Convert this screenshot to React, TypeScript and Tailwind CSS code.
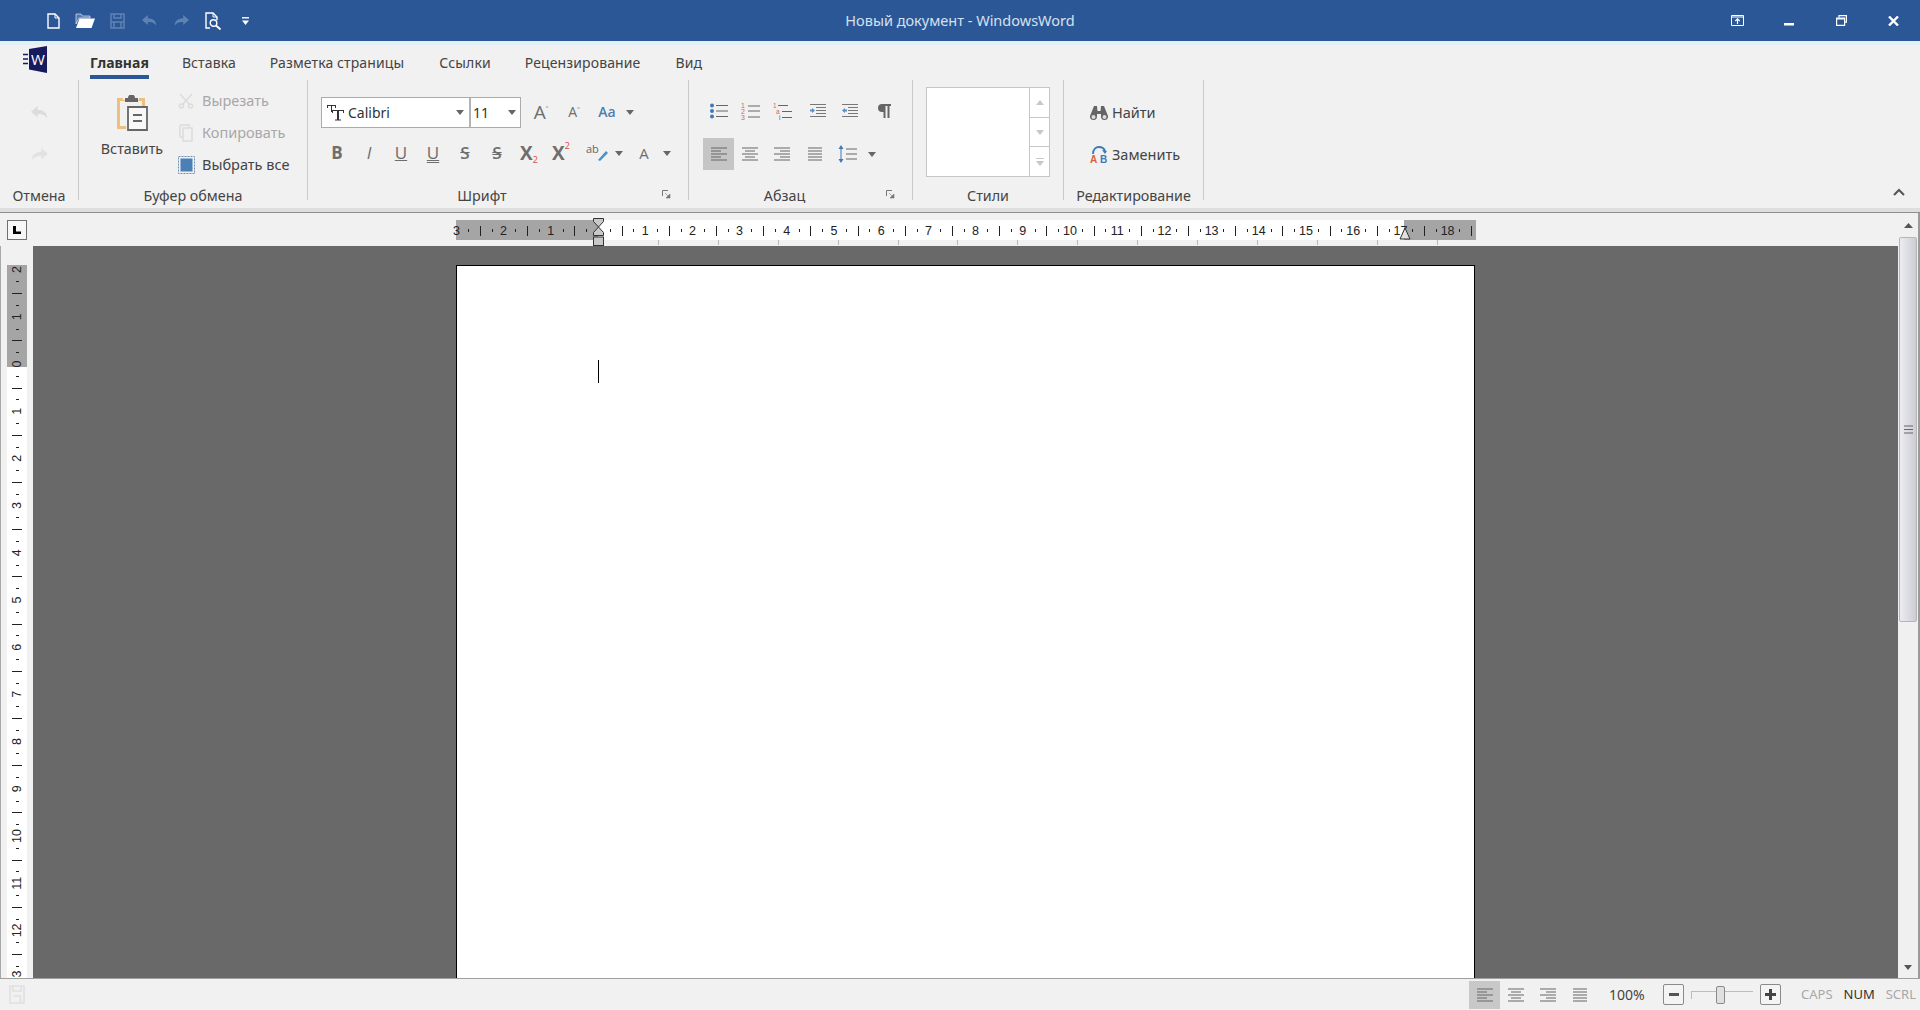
import React from "react";

const F = "font-['Noto_Sans','Open_Sans',sans-serif]";

function Slot({ w, h = 32, children, className = "" }: { w: number; h?: number; children?: React.ReactNode; className?: string }) {
  return (
    <div style={{ width: w, height: h }} className={"flex items-center justify-center shrink-0 " + className}>
      {children}
    </div>
  );
}

const Caret = ({ c = "#666" }: { c?: string }) => (
  <svg width="8" height="5" viewBox="0 0 8 5"><path d="M0 0h8L4 5z" fill={c} /></svg>
);

const Lines = ({ rows, c = "#666" }: { rows: [number, number][]; c?: string }) => (
  <svg width="18" height="14" viewBox="0 0 18 14">
    {rows.map(([x, w], i) => (
      <rect key={i} x={x} y={1 + i * (12 / (rows.length - 1)) - 0.5} width={w} height="1" fill={c} />
    ))}
  </svg>
);
const ALeft = () => <Lines rows={[[1, 16], [1, 10], [1, 16], [1, 10], [1, 16]]} />;
const ACenter = () => <Lines rows={[[1, 16], [4, 10], [1, 16], [4, 10], [1, 16]]} />;
const ARight = () => <Lines rows={[[1, 16], [7, 10], [1, 16], [7, 10], [1, 16]]} />;
const AJust = () => <Lines rows={[[2, 14], [2, 14], [2, 14], [2, 14], [2, 14]]} />;

const Bullets = () => (
  <svg width="20" height="16" viewBox="0 0 20 16">
    <circle cx="3" cy="2.5" r="2" fill="#3d7ab5" /><circle cx="3" cy="8" r="2" fill="#3d7ab5" /><circle cx="3" cy="13.5" r="2" fill="#3d7ab5" />
    <path d="M7 2.5h12M7 8h12M7 13.5h12" stroke="#666" strokeWidth="1" />
  </svg>
);
const Numbers = () => (
  <svg width="20" height="20" viewBox="0 0 20 20">
    <text x="0" y="7" fontSize="7" fill="#cf6a5a" fontFamily="Liberation Sans">1</text>
    <text x="0" y="13" fontSize="7" fill="#cf6a5a" fontFamily="Liberation Sans">2</text>
    <text x="0" y="19" fontSize="7" fill="#cf6a5a" fontFamily="Liberation Sans">3</text>
    <path d="M7 5h12M7 10h12M7 16h12" stroke="#666" strokeWidth="1" />
  </svg>
);
const Multi = () => (
  <svg width="20" height="20" viewBox="0 0 20 20">
    <text x="0" y="6.5" fontSize="6.5" fill="#cf6a5a" fontFamily="Liberation Sans">1</text>
    <text x="3" y="12.5" fontSize="6.5" fill="#cf6a5a" fontFamily="Liberation Sans">a</text>
    <text x="6" y="19" fontSize="6.5" fill="#555" fontFamily="Liberation Sans">i</text>
    <path d="M5 4.500h10M9 10.500h10M9 16.500h10" stroke="#666" strokeWidth="1" />
  </svg>
);
const Indent = ({ dir }: { dir: 1 | -1 }) => (
  <svg width="16" height="14" viewBox="0 0 16 14">
    <path d="M0 .5h16M6 3.5h10M6 6.5h10M6 9.5h10M0 12.5h16" stroke="#777" strokeWidth="1" />
    <path d={dir === 1 ? "M0 5.500h2V4l3 2.500L2 9V7.500H0z" : "M5 5.500H3V4L0 6.500 3 9V7.500h2z"} fill="#5a8fc0" />
  </svg>
);
const Pilcrow = () => (
  <svg width="16" height="16" viewBox="0 0 16 16" fill="#666">
    <path d="M6 1h9v2h-1.500v12h-2V3H9.500v12h-2V9H6A4 4 0 0 1 6 1z" />
  </svg>
);
const LineSpacing = () => (
  <svg width="20" height="18" viewBox="0 0 20 18">
    <path d="M3 0l2.500 4h-5zM3 18l2.500-4h-5z" fill="#3d7ab5" />
    <path d="M3 4v10" stroke="#3d7ab5" strokeWidth="1" />
    <path d="M8 4h11M8 9h11M8 14h11" stroke="#666" strokeWidth="1" />
  </svg>
);
const Launcher = () => (
  <svg width="9" height="9" viewBox="0 0 9 9">
    <path d="M.5 6V.5H6" fill="none" stroke="#777" />
    <path d="M3 3l4 4M8 4v4H4z" stroke="#777" fill="#777" strokeWidth=".6" />
  </svg>
);

const QNew = () => (
  <svg width="13" height="16" viewBox="0 0 13 16" fill="none" stroke="#fff" strokeWidth="1.400">
    <path d="M1 1h7l4 4v10H1z" /><path d="M8 1v4h4" strokeWidth="1" />
  </svg>
);
const QOpen = () => (
  <svg width="20" height="15" viewBox="0 0 20 15" fill="#fff">
    <path d="M1 3V1h5l1.500 2H15v2H4L1 11z" stroke="#fff" strokeWidth=".6" fillOpacity=".2" />
    <path d="M4.500 5.500H20L16.500 15H1z" />
  </svg>
);
const QSave = () => (
  <svg width="15" height="16" viewBox="0 0 15 16" fill="none" stroke="#5f82b3" strokeWidth="1.500">
    <path d="M1 1h13v14H1zM4 1v4h7V1M1 9h13M4 9v6h7V9" />
  </svg>
);
const QArrow = ({ flip, c = "#5f82b3", size = 15 }: { flip?: boolean; c?: string; size?: number }) => (
  <svg width={size} height={(size * 13) / 18} viewBox="0 0 18 13" style={flip ? { transform: "scaleX(-1)" } : undefined}>
    <path d="M7 0L0 6l7 6V8.500c4 0 7 .5 10 4 0-5-3-8-10-8.500z" fill={c} />
  </svg>
);
const QPreview = () => (
  <svg width="17" height="18" viewBox="0 0 17 18" fill="none" stroke="#fff" strokeWidth="1.400">
    <path d="M5 16H1V1h7l4 4v3" /><path d="M8 1v4h4" strokeWidth="1" />
    <circle cx="8.500" cy="11" r="3.300" /><path d="M11 13.500l4.500 4" strokeWidth="1.800" />
  </svg>
);
const QMore = () => (
  <svg width="7" height="8" viewBox="0 0 7 8"><path d="M0 .8h7" stroke="#fff" strokeWidth="1.400" /><path d="M0 3.500h7L3.500 8z" fill="#fff" /></svg>
);

const WordLogo = () => (
  <svg width="26" height="27" viewBox="0 0 26 27">
    <path d="M7 3L25 0v27L7 23.500z" fill="#171b5e" />
    <path d="M1 8.500h5M1 13h5M1 17.500h5" stroke="#171b5e" strokeWidth="1.600" />
    <text x="9" y="19" fontSize="15" fill="#fff" fontFamily="Open Sans">W</text>
  </svg>
);

const PasteIcon = () => (
  <svg width="32" height="36" viewBox="0 0 32 36">
    <path d="M1 3h6v2h16V3h6v9h-3V6H4v25h6v3H1z" fill="#eec07f" />
    <path d="M9 3h3a3.500 3.500 0 0 1 7 0h3v4H9z" fill="#666" />
    <path d="M12 12h19v23H12z" fill="#f8f8f8" stroke="#666" strokeWidth="1.800" />
    <path d="M17 19h9v2h-9zM17 25h9v2h-9z" fill="#666" />
  </svg>
);
const SelectAll = () => (
  <svg width="17" height="18" viewBox="0 0 17 18">
    <rect x=".5" y=".5" width="16" height="17" fill="none" stroke="#6f8fb0" strokeDasharray="2 1" />
    <rect x="2.500" y="2.500" width="12" height="13" fill="#4a80b5" />
  </svg>
);
const Scissors = () => (
  <svg width="16" height="16" viewBox="0 0 16 16" stroke="#dcdcdc" strokeWidth="1.500" fill="none">
    <path d="M2 1l10 11M14 1L4 12" /><circle cx="3.500" cy="13" r="2" /><circle cx="12.500" cy="13" r="2" />
  </svg>
);
const CopyIcon = () => (
  <svg width="16" height="18" viewBox="0 0 16 18" stroke="#dcdcdc" strokeWidth="1.500" fill="none">
    <path d="M2 1h9v3M5 4h9v13H5zM2 1v12h3" />
  </svg>
);
const TtIcon = () => (
  <svg width="17" height="17" viewBox="0 0 17 17" fill="#333">
    <path d="M0 1h9v3H8V2H5v6H4V2H1v2H0z" />
    <path d="M5 6h12v3h-1V7h-4v8.500h2v1H8v-1h2V7H6v2H5z" />
  </svg>
);
const BinIcon = () => (
  <svg width="18" height="15" viewBox="0 0 18 15" fill="#666">
    <path d="M4 0h3l.500 5H10.500L11 0h3l4 10a3.500 3.500 0 1 1-7 1V8H7v3a3.500 3.500 0 1 1-7-1z" />
    <circle cx="3.500" cy="11" r="2" fill="#ddd" /><circle cx="14.500" cy="11" r="2" fill="#ddd" />
  </svg>
);
const ReplaceIcon = () => (
  <svg width="18" height="18" viewBox="0 0 18 18">
    <path d="M3 8C3 3 6 1 9 1s5 1 6 4" fill="none" stroke="#3d7ab5" strokeWidth="1.800" />
    <path d="M12 4l5 1-2 3z" fill="#3d7ab5" />
    <text x="0" y="17" fontSize="10" fill="#d9613f" fontFamily="Liberation Sans" fontWeight="700">A</text>
    <text x="10" y="17" fontSize="10" fill="#3d7ab5" fontFamily="Liberation Sans" fontWeight="700">B</text>
  </svg>
);

function FmtLetter({ children, className = "" }: { children: React.ReactNode; className?: string }) {
  return <span className={"font-['Open_Sans',sans-serif] text-[#6e6e6e] leading-[1.2] " + className}>{children}</span>;
}

function GroupLabel({ children, launcher }: { children: React.ReactNode; launcher?: boolean }) {
  return (
    <div className={"relative h-[24px] flex items-center justify-center text-[14.3px] text-[#444] whitespace-nowrap " + (launcher ? "pr-[32px]" : "")}>
      {children}
      {launcher && (
        <span className="absolute right-[17px] top-[6px]"><Launcher /></span>
      )}
    </div>
  );
}
const Sep = () => <div className="w-px h-[120px] bg-[#c9c9c9] shrink-0" />;

function Group({ w, label, launcher, children }: { w: number; label: string; launcher?: boolean; children?: React.ReactNode }) {
  return (
    <div style={{ width: w }} className="shrink-0 flex flex-col">
      <div className="h-[104px]">{children}</div>
      <GroupLabel launcher={launcher}>{label}</GroupLabel>
    </div>
  );
}

const Tab = ({ label, ml, active }: { label: string; ml: number; active?: boolean }) => (
  <div style={{ marginLeft: ml }} className={"relative h-[35px] flex items-center text-[14px] whitespace-nowrap " + (active ? "font-bold text-[#333]" : "text-[#444] tracking-[0.12px]")}>
    {label}
    {active && <span className="absolute left-0 right-0 top-[30px] h-[4px] bg-[#2b5797]" />}
  </div>
);

const cm = 47.2;
const zero = 598;
function HRuler() {
  const nums: React.ReactNode[] = [];
  for (let i = -12; i <= 76; i++) {
    const x = zero + (i * cm) / 4;
    if (x < 456 || x > 1476) continue;
    if (i % 4 === 0 && i !== 0) {
      nums.push(<text key={i} x={x} y={22} textAnchor="middle" fontSize="12.5" fill="#222" fontFamily="Liberation Sans">{Math.abs(i / 4)}</text>);
    } else if (i % 2 !== 0) {
      nums.push(<rect key={i} x={Math.round(x)} y={16} width="1" height="3" fill="#222" />);
    } else if (i !== 0) {
      nums.push(<rect key={i} x={Math.round(x)} y={13} width="1" height="10" fill="#222" />);
    }
  }
  return (
    <svg width="1040" height="33" viewBox="446 0 1040 33" className="shrink-0 ml-[439px]">
      <rect x="456" y="7" width="1020" height="20" fill="#fff" />
      <rect x="456" y="7" width="142" height="20" fill="#a5a5a5" />
      <rect x="1404" y="7" width="72" height="20" fill="#a5a5a5" />
      {nums}
      {Array.from({ length: 14 }).map((_, i) => (
        <rect key={i} x={Math.round(zero + 59.900 * (i + 1))} y="27" width="1" height="5" fill="#b8b8b8" />
      ))}
      <path d="M593.500 5.500h10v3L598.500 14l5 5.500v3h-10v-3l5-5.500-5-5.500z" fill="#c8c8c8" stroke="#333" />
      <rect x="593.500" y="24" width="10" height="8.500" fill="#c8c8c8" stroke="#333" />
      <path d="M1400 26l5-11 5 11z" fill="#e0e0e0" stroke="#333" />
    </svg>
  );
}
function VRuler() {
  const vz = 364;
  const nums: React.ReactNode[] = [];
  for (let i = -8; i <= 52; i++) {
    const y = vz + (i * cm) / 4;
    if (y < 266 || y > 978) continue;
    if (i % 4 === 0) {
      nums.push(<text key={i} x={0} y={0} transform={`translate(16.500 ${y}) rotate(-90)`} textAnchor="middle" dominantBaseline="central" fontSize="12.5" fill="#222" fontFamily="Liberation Sans">{Math.abs(i / 4)}</text>);
    } else if (i % 2 !== 0) {
      nums.push(<rect key={i} x="16" y={Math.round(y)} width="3" height="1" fill="#222" />);
    } else {
      nums.push(<rect key={i} x="12" y={Math.round(y)} width="10" height="1" fill="#222" />);
    }
  }
  return (
    <svg width="33" height="732" viewBox="0 246 33 732" className="block">
      <rect x="7" y="265" width="20" height="713" fill="#fff" />
      <rect x="7" y="265" width="20" height="102" fill="#a5a5a5" />
      {nums}
    </svg>
  );
}

export default function App() {
  return (
    <div className={"w-[1920px] h-[1010px] overflow-hidden flex flex-col bg-[#f1f1f1] text-[#444] " + F}>
      {/* title bar */}
      <div className="h-[41px] bg-[#2b5797] shrink-0 flex items-center relative">
        <div className="flex items-center pl-[37px]">
          <Slot w={32}><QNew /></Slot>
          <Slot w={32}><QOpen /></Slot>
          <Slot w={32}><QSave /></Slot>
          <Slot w={32}><QArrow /></Slot>
          <Slot w={32}><QArrow flip /></Slot>
          <Slot w={32}><QPreview /></Slot>
          <Slot w={32}><QMore /></Slot>
        </div>
        <div className="absolute left-0 right-0 text-center text-[14.5px] text-[#d5e0ee] pointer-events-none">Новый документ - WindowsWord</div>
        <div className="ml-auto flex items-center pr-[1px]">
          <Slot w={52}>
            <svg width="13" height="11" viewBox="0 0 13 11" fill="none" stroke="#fff"><path d="M.5 .5h12v10H.5zM.5 2h12" /><path d="M6.500 9V4M4.300 6L6.500 3.800 8.700 6" strokeWidth="1.200" /></svg>
          </Slot>
          <Slot w={52}>
            <svg width="10" height="12" viewBox="0 0 10 12"><rect y="8" width="10" height="2.500" fill="#fff" /></svg>
          </Slot>
          <Slot w={52}>
            <svg width="11" height="11" viewBox="0 0 11 11" fill="none" stroke="#fff" strokeWidth="1.200"><path d="M3 2.500V.6h7.400v6.500H8.500" /><path d="M.6 3h8v7.400h-8z" /><path d="M.6 3.800h8" strokeWidth="1.400" /></svg>
          </Slot>
          <Slot w={52}>
            <svg width="11" height="10" viewBox="0 0 11 10" stroke="#fff" strokeWidth="2.400"><path d="M1 .5l9 9M10 .5l-9 9" /></svg>
          </Slot>
        </div>
      </div>
      <div className="h-[4px] bg-[#e3f1f7] shrink-0" />

      {/* ribbon */}
      <div className="shrink-0 bg-[#f1f1f1] relative">
        <div className="h-[35px] flex items-start">
          <div className="w-[26px] shrink-0 ml-[22px] pt-[1px]"><WordLogo /></div>
          <Tab label="Главная" ml={42} active />
          <Tab label="Вставка" ml={33} />
          <Tab label="Разметка страницы" ml={34} />
          <Tab label="Ссылки" ml={35} />
          <Tab label="Рецензирование" ml={34} />
          <Tab label="Вид" ml={35} />
        </div>
        <div className="h-[128px] flex items-start">
          <Group w={78} label="Отмена">
            <div className="flex flex-col items-center">
              <Slot w={40} h={42} className="mt-[11px]"><QArrow c="#dcdcdc" size={17} /></Slot>
              <Slot w={40} h={42}><QArrow flip c="#e2e2e2" size={17} /></Slot>
            </div>
          </Group>
          <Sep />
          <Group w={228} label="Буфер обмена">
            <div className="flex">
              <div className="ml-[21px] w-[64px] flex flex-col items-center pt-[15px]">
                <PasteIcon />
                <div className="mt-[8px] text-[14.3px] leading-[20px] text-[#444] whitespace-nowrap">Вставить</div>
              </div>
              <div className="ml-[8px] pt-[5px] flex flex-col text-[14.5px] whitespace-nowrap">
                <div className="h-[32px] flex items-center text-[#a8a8a8]"><Slot w={28}><Scissors /></Slot><span className="ml-[2px]">Вырезать</span></div>
                <div className="h-[32px] flex items-center text-[#a8a8a8]"><Slot w={28}><CopyIcon /></Slot><span className="ml-[2px]">Копировать</span></div>
                <div className="h-[32px] flex items-center text-[#444]"><Slot w={28}><SelectAll /></Slot><span className="ml-[2px]">Выбрать все</span></div>
              </div>
            </div>
          </Group>
          <Sep />
          <Group w={380} label="Шрифт" launcher>
            <div className="pl-[13px] pt-[17px]">
              <div className="flex items-center h-[31px]">
                <div className="w-[200px] h-[31px] flex bg-white border border-[#ababab]">
                  <div className="w-[149px] flex items-center border-r-2 border-[#b4b4b4]">
                    <span className="ml-[5px]"><TtIcon /></span>
                    <span className="ml-[4px] text-[14px] text-[#333]">Calibri</span>
                    <span className="ml-auto mr-[5px]"><Caret /></span>
                  </div>
                  <div className="flex-1 flex items-center">
                    <span className="ml-[2px] text-[14px] text-[#333]">11</span>
                    <span className="ml-auto mr-[4px]"><Caret /></span>
                  </div>
                </div>
                <Slot w={32} className="ml-[4px]"><FmtLetter className="text-[19px]">A</FmtLetter><span className="text-[9px] leading-none self-start mt-[8px] text-[#666]">˄</span></Slot>
                <Slot w={32} className="ml-[1px]"><FmtLetter className="text-[14px]">A</FmtLetter><span className="text-[9px] leading-none self-start mt-[9px] text-[#666]">˅</span></Slot>
                <Slot w={34}><FmtLetter className="text-[14px] font-semibold !text-[#4f7fae]">Aa</FmtLetter></Slot>
                <Slot w={12}><Caret /></Slot>
              </div>
              <div className="flex items-center h-[32px] mt-[9px]">
                <Slot w={32}><FmtLetter className="text-[17px] font-bold">B</FmtLetter></Slot>
                <Slot w={32}><FmtLetter className="text-[17px] italic">I</FmtLetter></Slot>
                <Slot w={32}><FmtLetter className="text-[17px] underline">U</FmtLetter></Slot>
                <Slot w={32}><FmtLetter className="text-[17px] underline decoration-double">U</FmtLetter></Slot>
                <Slot w={32}><FmtLetter className="text-[17px] font-semibold line-through">S</FmtLetter></Slot>
                <Slot w={32}><FmtLetter className="text-[17px] font-semibold line-through decoration-double">S</FmtLetter></Slot>
                <Slot w={32}><FmtLetter className="text-[19px] font-bold">X</FmtLetter><span className="text-[9px] leading-none text-[#d9534f] self-end mb-[5px]">2</span></Slot>
                <Slot w={32}><FmtLetter className="text-[19px] font-bold">X</FmtLetter><span className="text-[9px] leading-none text-[#d9534f] self-start mt-[4px]">2</span></Slot>
                <Slot w={34} className="ml-[3px]">
                  <svg width="22" height="18" viewBox="0 0 22 18">
                    <text x="0" y="9" fontSize="11" fill="#666" fontFamily="Open Sans">ab</text>
                    <path d="M12 16l8-9 2 2-8 8z" fill="#4a90c8" />
                  </svg>
                </Slot>
                <Slot w={10}><Caret /></Slot>
                <Slot w={28} className="ml-[6px]"><FmtLetter className="text-[15px]">A</FmtLetter></Slot>
                <Slot w={12} className="ml-[3px]"><Caret /></Slot>
              </div>
            </div>
          </Group>
          <Sep />
          <Group w={223} label="Абзац" launcher>
            <div className="pl-[14px] pt-[15px]">
              <div className="flex h-[32px] items-center">
                <Slot w={32}><Bullets /></Slot>
                <Slot w={32}><Numbers /></Slot>
                <Slot w={32}><Multi /></Slot>
                <Slot w={32} className="ml-[3px]"><Indent dir={1} /></Slot>
                <Slot w={32}><Indent dir={-1} /></Slot>
                <Slot w={32} className="ml-[2px]"><Pilcrow /></Slot>
              </div>
              <div className="flex h-[32px] items-center mt-[11px]">
                <Slot w={31} className="bg-[#c5c5c5]"><ALeft /></Slot>
                <Slot w={32}><ACenter /></Slot>
                <Slot w={32}><ARight /></Slot>
                <Slot w={32} className="ml-[1px]"><AJust /></Slot>
                <Slot w={32} className="ml-[1px]"><LineSpacing /></Slot>
                <Slot w={12} className="ml-[2px]"><Caret /></Slot>
              </div>
            </div>
          </Group>
          <Sep />
          <Group w={150} label="Стили">
            <div className="pl-[13px] pt-[7px]">
              <div className="w-[124px] h-[90px] flex bg-white border border-[#c6c6c6]">
                <div className="flex-1" />
                <div className="w-[20px] border-l border-[#c6c6c6] flex flex-col">
                  <div className="flex-1 flex items-center justify-center border-b border-[#c6c6c6]"><svg width="8" height="5" viewBox="0 0 8 5"><path d="M0 5h8L4 0z" fill="#c8c8c8" /></svg></div>
                  <div className="flex-1 flex items-center justify-center border-b border-[#c6c6c6]"><Caret c="#c8c8c8" /></div>
                  <div className="flex-1 flex items-center justify-center"><svg width="8" height="8" viewBox="0 0 8 8"><path d="M0 0h8v1H0z M0 3h8L4 8z" fill="#c8c8c8" /></svg></div>
                </div>
              </div>
            </div>
          </Group>
          <Sep />
          <Group w={139} label="Редактирование">
            <div className="pl-[24px] pt-[17px] text-[14.5px] text-[#444] whitespace-nowrap">
              <div className="h-[32px] flex items-center"><Slot w={21}><BinIcon /></Slot><span className="ml-[3px]">Найти</span></div>
              <div className="h-[32px] flex items-center mt-[10px]"><Slot w={21}><ReplaceIcon /></Slot><span className="ml-[3px]">Заменить</span></div>
            </div>
          </Group>
          <Sep />
          <div className="ml-auto mr-[15px] mt-[108px]">
            <svg width="12" height="8" viewBox="0 0 12 8" fill="none" stroke="#555" strokeWidth="2"><path d="M1 7l5-5 5 5" /></svg>
          </div>
        </div>
      </div>
      <div className="h-[4px] shrink-0 bg-[#dedede]" />
      <div className="h-px shrink-0 bg-[#8f8f8f]" />

      {/* document region */}
      <div className="flex-1 min-h-0 flex">
        <div className="flex-1 min-w-0 flex flex-col">
          <div className="h-[33px] shrink-0 flex items-start bg-[#f1f1f1]">
            <div className="w-0 shrink-0 ml-[7px]">
              <div className="w-[20px] h-[20px] mt-[7px] border border-[#707070] bg-[#f7f7f7] flex items-center justify-center">
                <svg width="10" height="10" viewBox="0 0 10 10"><path d="M1 1h3v5.500h5V9H1z" fill="#000" /></svg>
              </div>
            </div>
            <HRuler />
          </div>
          <div className="flex-1 min-h-0 flex">
            <div className="w-[33px] shrink-0 bg-[#f1f1f1] overflow-hidden border-l border-[#a8a8a8]"><div className="-ml-px"><VRuler /></div></div>
            <div className="flex-1 min-w-0 bg-[#696969] overflow-hidden pt-[19px] pl-[423px]">
              <div className="w-[1019px] h-[760px] bg-white border-t border-x border-black pl-[141px] pt-[94px]">
                <div className="w-px h-[23px] bg-black" />
              </div>
            </div>
          </div>
        </div>
        {/* scrollbar */}
        <div className="w-[22px] shrink-0 bg-[#f0f0f0] flex flex-col items-start pl-px border-r-2 border-[#9a9a9a]">
          <div className="h-[24px] w-[18px] flex items-center justify-center">
            <svg width="9" height="5" viewBox="0 0 9 5"><path d="M0 5h9L4.500 0z" fill="#555" /></svg>
          </div>
          <div className="w-[18px] h-[385px] rounded-[2px] border border-[#b5b5b5] bg-gradient-to-r from-[#ececf0] to-[#ccccd4] flex items-center justify-center">
            <svg width="9" height="9" viewBox="0 0 9 9" stroke="#666"><path d="M0 1h9M0 4.500h9M0 8h9" /></svg>
          </div>
          <div className="mt-auto h-[22px] w-[18px] flex items-center justify-center">
            <Caret c="#555" />
          </div>
        </div>
      </div>

      {/* status bar */}
      <div className="h-[32px] shrink-0 bg-[#f1f1f1] border-t border-[#a0a0a0] flex items-center">
        <div className="ml-[9px] opacity-40">
          <svg width="16" height="19" viewBox="0 0 16 19" fill="none" stroke="#c8c8c8" strokeWidth="1.600"><path d="M1 1h14v17H1zM4 1v5h8V1M4.500 11h7v7" /></svg>
        </div>
        <div className="ml-auto flex items-center text-[14px]">
          <Slot w={31} h={28} className="bg-[#c8c8c8]"><ALeft /></Slot>
          <Slot w={32} h={28}><ACenter /></Slot>
          <Slot w={32} h={28}><ARight /></Slot>
          <Slot w={32} h={28}><AJust /></Slot>
          <span className="ml-[13px] w-[36px] text-[#444]">100%</span>
          <div className="ml-[18px] w-[21px] h-[21px] rounded-[2px] border border-[#8a8a8a] bg-[#f4f4f4] flex items-center justify-center">
            <span className="w-[10px] h-[3px] bg-[#555]" />
          </div>
          <div className="ml-[7px] w-[62px] h-[21px] flex items-center">
            <div className="w-[25px] h-[8px] border-t border-l border-[#bdbdbd]" />
            <div className="w-[9px] h-[18px] rounded-[2px] border border-[#8a8a8a] bg-[#e0e0e0]" />
            <div className="flex-1 h-[8px] border-t border-[#bdbdbd]" />
          </div>
          <div className="ml-[7px] w-[21px] h-[21px] rounded-[2px] border border-[#8a8a8a] bg-[#f4f4f4] flex items-center justify-center text-[#333]">
            <svg width="11" height="11" viewBox="0 0 11 11"><path d="M4 0h3v4h4v3H7v4H4V7H0V4h4z" fill="#444" /></svg>
          </div>
          <span className="ml-[20px] text-[#a8a8a8] text-[13px]">CAPS</span>
          <span className="ml-[11px] text-[#333] text-[13px]">NUM</span>
          <span className="ml-[11px] mr-[4px] text-[#a8a8a8] text-[13px]">SCRL</span>
        </div>
      </div>
    </div>
  );
}
